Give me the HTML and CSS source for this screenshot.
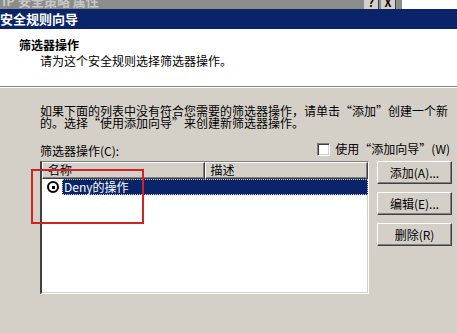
FILE: index.html
```html
<!DOCTYPE html>
<html>
<head>
    <title>安全规则向导</title>
    <link rel="stylesheet" href="styles.css">
</head>
<body>
    <div class="window">
        <div class="top-strip">
            <span class="top-text">IP 安全策略 属性</span>
            <span class="top-fill"></span>
            <span class="cap-btn">?</span>
            <span class="cap-btn">X</span>
            <span class="cap-edge"></span>
            <span class="top-white"></span>
        </div>
        <div class="titlebar">安全规则向导</div>

        <div class="header">
            <div class="header-title">筛选器操作</div>
            <div class="header-sub">请为这个安全规则选择筛选器操作。</div>
        </div>

        <div class="content">
            <p class="intro">如果下面的列表中没有符合您需要的筛选器操作，请单击“添加”创建一个新的。选择“使用添加向导”来创建新筛选器操作。</p>

            <div class="label-row">
                <span class="list-label">筛选器操作(C):</span>
                <label class="wizard-check">
                    <span class="checkbox"></span>
                    使用“添加向导”(W)
                </label>
            </div>

            <div class="list-row">
                <div class="listview">
                    <div class="lv-header">
                        <span class="lv-col col-name">名称</span>
                        <span class="lv-col col-desc">描述</span>
                    </div>
                    <div class="lv-item">
                        <span class="radio"><span class="radio-dot"></span></span>
                        <span class="item-text">Deny的操作</span>
                    </div>
                </div>
                <div class="buttons">
                    <button class="btn">添加(A)...</button>
                    <button class="btn">编辑(E)...</button>
                    <button class="btn">删除(R)</button>
                </div>
            </div>
        </div>

        <!-- 红框标注 -->
        <div class="mark"></div>
    </div>
</body>
</html>
```

FILE: styles.css
```css
body {
    margin: 0;
    padding: 0;
    font-family: "Noto Sans CJK SC", "Liberation Sans", sans-serif;
    font-size: 12px;
    color: #000000;
    background-color: #d4d0c8;
}

.window {
    width: 457px;
    height: 333px;
    overflow: hidden;
    position: relative;
    background-color: #d4d0c8;
}

.top-strip {
    height: 9px;
    display: flex;
    background-color: #8c8c8c;
    overflow: hidden;
}

.top-text {
    color: #c8c8c8;
    font-weight: bold;
    font-size: 13px;
    line-height: 13px;
    margin-top: -6px;
    padding-left: 2px;
    white-space: nowrap;
}

.top-fill {
    flex: 1;
}

.cap-btn {
    width: 15px;
    height: 9px;
    margin-right: 2px;
    background-color: #d4d0c8;
    border-right: 1px solid #404040;
    font-size: 11px;
    font-weight: bold;
    line-height: 5px;
    text-align: center;
    overflow: hidden;
    box-sizing: border-box;
}

.cap-edge {
    width: 4px;
    background-color: #8c8c8c;
}

.top-white {
    width: 55px;
    background-color: #ffffff;
}

.titlebar {
    height: 20px;
    background-color: #0a246a;
    color: #ffffff;
    font-weight: bold;
    font-size: 13px;
    line-height: 20px;
    white-space: nowrap;
}

.header {
    height: 58px;
    background-color: #ffffff;
    border-bottom: 1px solid #808080;
    box-shadow: 0 1px 0 #ffffff;
    padding-left: 19px;
    box-sizing: border-box;
    padding-top: 8px;
}

.header-title {
    font-weight: bold;
    line-height: 16px;
}

.header-sub {
    padding-left: 21px;
    line-height: 16px;
}

.content {
    padding: 18px 0 0 40px;
}

.intro {
    margin: 0;
    width: 412px;
    line-height: 12px;
}

.label-row {
    display: flex;
    justify-content: space-between;
    align-items: flex-end;
    width: 412px;
    margin-top: 13px;
    height: 16px;
}

.list-label {
    line-height: 14px;
}

.wizard-check {
    display: flex;
    align-items: center;
    gap: 5px;
    line-height: 14px;
    margin-bottom: 2px;
    margin-right: 2px;
}

.checkbox {
    width: 13px;
    height: 13px;
    background-color: #ffffff;
    border-top: 1px solid #808080;
    border-left: 1px solid #808080;
    border-right: 1px solid #ffffff;
    border-bottom: 1px solid #ffffff;
    box-shadow: inset 1px 1px 0 #404040, inset -1px -1px 0 #d4d0c8;
    box-sizing: border-box;
}

.list-row {
    display: flex;
    gap: 8px;
    margin-top: 3px;
}

.listview {
    width: 329px;
    height: 133px;
    background-color: #ffffff;
    border-top: 1px solid #808080;
    border-left: 2px solid #404040;
    border-right: 1px solid #ffffff;
    border-bottom: 1px solid #ffffff;
    box-shadow: inset -1px -1px 0 #d4d0c8;
    box-sizing: border-box;
}

.lv-header {
    display: flex;
    height: 17px;
}

.lv-col {
    background-color: #d4d0c8;
    border-top: 1px solid #ffffff;
    border-left: 1px solid #ffffff;
    border-bottom: 1px solid #404040;
    border-right: 1px solid #404040;
    box-shadow: inset -1px -1px 0 #808080;
    box-sizing: border-box;
    padding-left: 5px;
    line-height: 14px;
}

.col-name {
    width: 163px;
}

.col-desc {
    width: 164px;
}

.lv-item {
    display: flex;
    align-items: center;
    height: 16px;
    padding-left: 5px;
}

.radio {
    width: 12px;
    height: 12px;
    border: 2px solid #000000;
    border-radius: 50%;
    box-sizing: border-box;
    display: flex;
    align-items: center;
    justify-content: center;
    margin-right: 3px;
}

.radio-dot {
    width: 3px;
    height: 3px;
    background-color: #000000;
}

.item-text {
    flex: 1;
    height: 16px;
    background-color: #0a246a;
    color: #ffffff;
    border: 1px dotted #d4d0c8;
    box-sizing: border-box;
    padding-left: 1px;
    line-height: 13px;
}

.buttons {
    display: flex;
    flex-direction: column;
    gap: 8px;
}

.btn {
    width: 75px;
    height: 23px;
    padding: 0;
    font-family: "Noto Sans CJK SC", "Liberation Sans", sans-serif;
    font-size: 12px;
    color: #000000;
    background-color: #d4d0c8;
    border-top: 1px solid #ffffff;
    border-left: 1px solid #ffffff;
    border-right: 1px solid #404040;
    border-bottom: 1px solid #404040;
    box-shadow: inset -1px -1px 0 #808080;
}

.mark {
    position: absolute;
    left: 31px;
    top: 169px;
    width: 113px;
    height: 55px;
    border: 2px solid #d02424;
    box-sizing: border-box;
}
```
